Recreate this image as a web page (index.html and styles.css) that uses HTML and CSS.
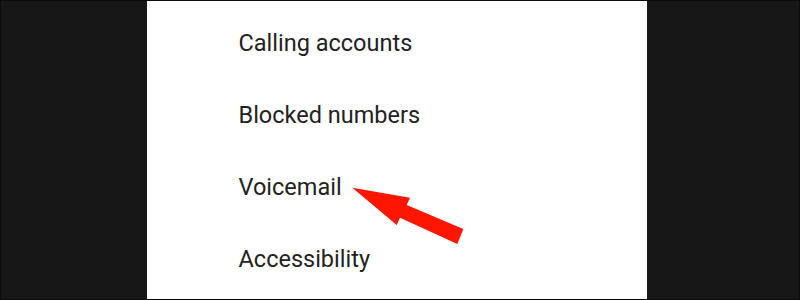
FILE: index.html
```html
<!DOCTYPE html>
<html>
<head>
<meta charset="utf-8">
<link rel="stylesheet" href="styles.css">
</head>
<body>
<div class="frame">
  <div class="panel">
    <div class="item">Calling accounts</div>
    <div class="item">Blocked numbers</div>
    <div class="item">Voicemail</div>
    <div class="item">Accessibility</div>
  </div>
  <svg class="arrow" width="800" height="300" viewBox="0 0 800 300">
    <polygon fill="#fe1600" points="352.3,187.7 410,197.7 406.7,205 463.3,229 457.3,244 400,217.7 396.7,225"/>
  </svg>
</div>
</body>
</html>
```
FILE: styles.css
```css
html, body {
  margin: 0;
  padding: 0;
  background: #171717;
}
.frame {
  position: relative;
  box-sizing: border-box;
  width: 800px;
  height: 300px;
  border: 1px solid rgba(0, 0, 0, 0.5);
  background: #171717;
  overflow: hidden;
}
.panel {
  margin-left: 146px;
  width: 500px;
  height: 298px;
  background: #ffffff;
  box-sizing: border-box;
  padding-top: 6px;
  padding-left: 91.5px;
}
.item {
  font-family: Roboto, "Noto Sans", sans-serif;
  font-size: 23.5px;
  line-height: 72px;
  height: 72px;
  color: #222222;
  white-space: nowrap;
}
.arrow {
  position: absolute;
  left: -1px;
  top: -1px;
}
```
